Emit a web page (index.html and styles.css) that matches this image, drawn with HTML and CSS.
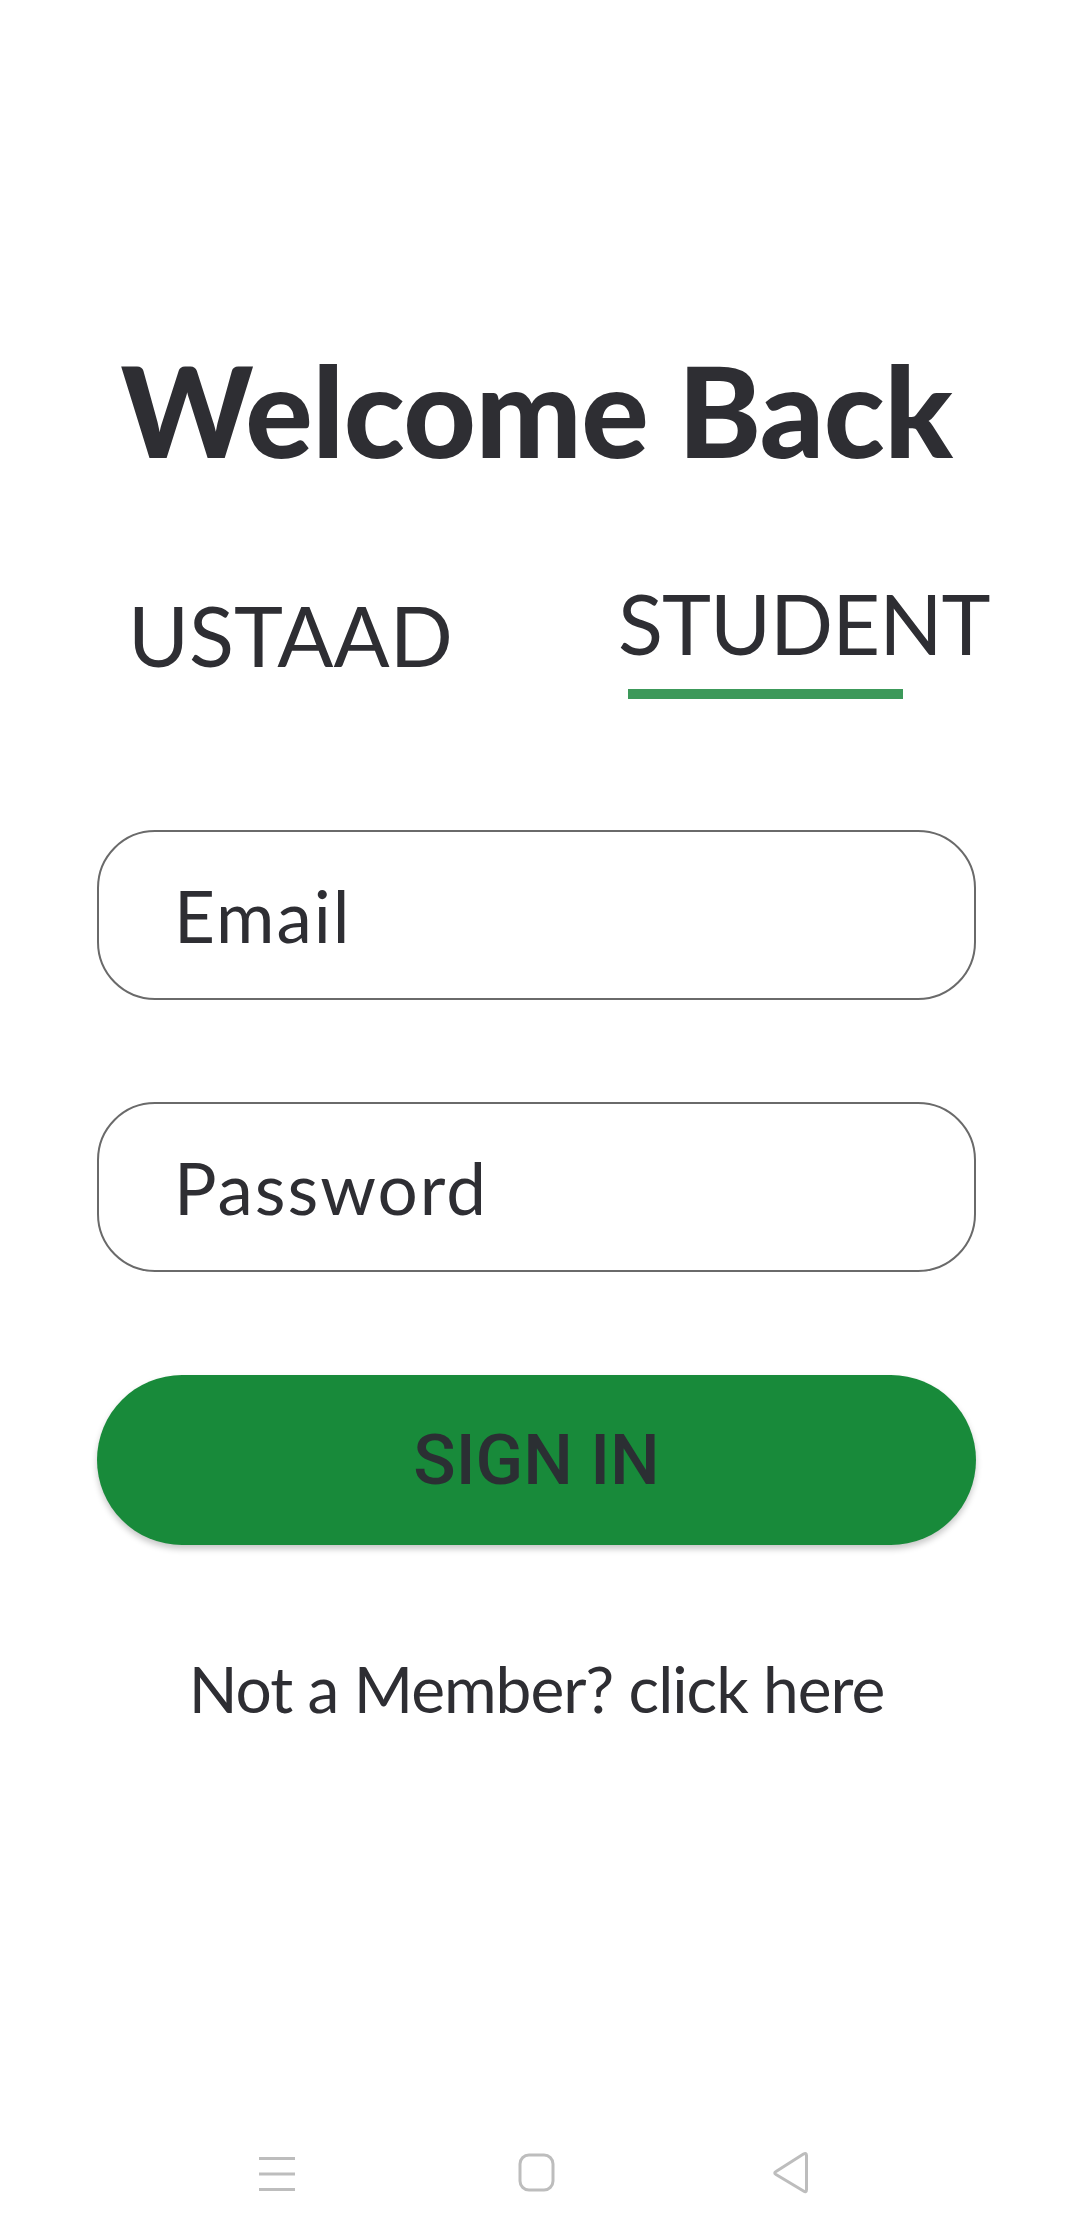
FILE: index.html
```html
<!DOCTYPE html>
<html lang="en">
<head>
<meta charset="utf-8">
<title>Welcome Back</title>
<link rel="stylesheet" href="styles.css">
</head>
<body>
<main class="screen">
  <h1 class="title">Welcome Back</h1>
  <div class="tabs">
    <div class="tab tab-inactive">USTAAD</div>
    <div class="tab tab-active">STUDENT<span class="tab-indicator"></span></div>
  </div>
  <form class="form">
    <input class="field" type="email" placeholder="Email">
    <input class="field" type="password" placeholder="Password">
    <button class="signin" type="button">SIGN IN</button>
  </form>
  <p class="signup">Not a Member? click here</p>
  <nav class="navbar">
    <svg class="nav-icon" width="40" height="40" viewBox="0 0 40 40">
      <path d="M2 5.5H38M2 21H38M2 36.5H38" stroke="#bdbdbd" stroke-width="3" fill="none"/>
    </svg>
    <svg class="nav-icon" width="40" height="40" viewBox="0 0 40 40">
      <rect x="3" y="2" width="33" height="35" rx="9" stroke="#bdbdbd" stroke-width="3" fill="none"/>
    </svg>
    <svg class="nav-icon nav-back" width="40" height="44" viewBox="0 0 40 44">
      <path d="M35.5 4.5V38.5Q35.5 42 32.5 40L5 23.5Q2.5 22 5 20.5L32.5 3Q35.5 1.5 35.5 4.5Z" stroke="#bdbdbd" stroke-width="3" fill="none" stroke-linejoin="round"/>
    </svg>
  </nav>
</main>
</body>
</html>
```
FILE: styles.css
```css
html, body {
  margin: 0;
  padding: 0;
  background: #ffffff;
}

.screen {
  display: flex;
  flex-direction: column;
  align-items: center;
  min-height: 2238px;
  box-sizing: border-box;
  font-family: "Lato", "Noto Sans", sans-serif;
  color: #2e2e33;
}

.title {
  margin: 347px 0 0;
  font-size: 126px;
  line-height: 1;
  font-weight: 900;
  letter-spacing: -0.5px;
}

.tabs {
  display: grid;
  grid-template-columns: 490px auto;
  align-items: start;
  width: 100%;
  box-sizing: border-box;
  padding-left: 128px;
  margin-top: 109px;
}

.tab {
  font-size: 83px;
  line-height: 1;
  font-weight: 400;
}

.tab-inactive {
  margin-top: 12px;
}

.tab-active {
  display: flex;
  flex-direction: column;
  letter-spacing: -1px;
}

.tab-indicator {
  display: block;
  width: 275px;
  height: 10px;
  margin: 24px 0 0 10px;
  background: #3c995a;
}

.form {
  display: flex;
  flex-direction: column;
  gap: 102px;
  width: 879px;
  margin-top: 131px;
}

.field {
  height: 170px;
  box-sizing: border-box;
  border: 2.5px solid #6a6a6a;
  border-radius: 58px;
  padding: 0 0 0 75px;
  font-family: "Lato", "Noto Sans", sans-serif;
  font-size: 71px;
  letter-spacing: 2px;
  color: #2e2e33;
  background: #fff;
  outline: none;
}

.field::placeholder {
  color: #2e2e33;
  opacity: 1;
}

.signin {
  height: 170px;
  border: none;
  border-radius: 85px;
  background: #188a3a;
  color: #2b2f33;
  font-family: "Roboto", sans-serif;
  font-weight: 500;
  font-size: 70px;
  box-shadow: 0 4px 6px rgba(0, 0, 0, 0.22);
  margin-top: 1px;
}

.signup {
  margin: 112px 0 0;
  font-size: 64px;
  line-height: 1;
  letter-spacing: -1px;
}

.navbar {
  margin-top: auto;
  height: 130px;
  width: 100%;
  display: grid;
  grid-template-columns: repeat(3, 260px);
  justify-content: center;
  justify-items: center;
  align-items: center;
}

.nav-icon {
  display: block;
}

.nav-back {
  margin-right: 12px;
}
```
